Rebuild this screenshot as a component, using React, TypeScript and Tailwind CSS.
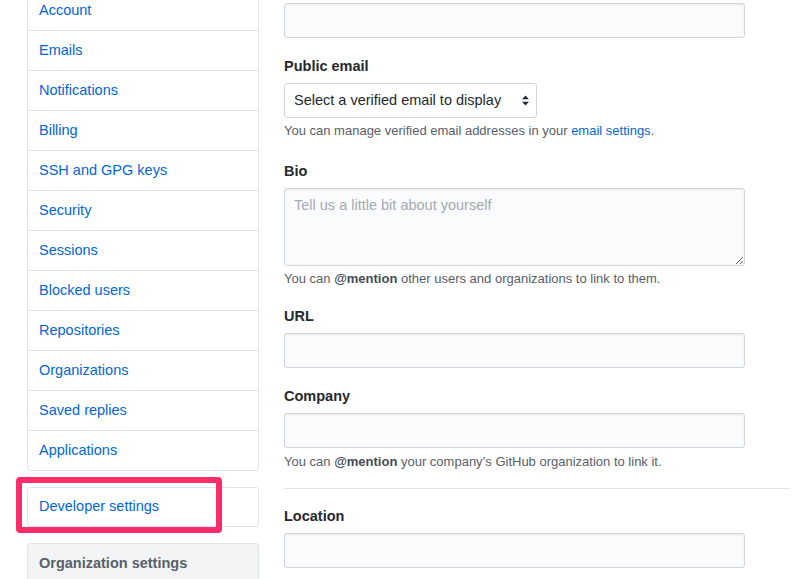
import React from 'react';

const navItems = [
  'Account',
  'Emails',
  'Notifications',
  'Billing',
  'SSH and GPG keys',
  'Security',
  'Sessions',
  'Blocked users',
  'Repositories',
  'Organizations',
  'Saved replies',
  'Applications',
];

const inputCls =
  'block w-[461px] h-[35px] rounded-[3px] border border-[#d1d5da] bg-[#fafbfc] shadow-[inset_0_1px_2px_rgba(27,31,35,0.075)] outline-none';

const Label = ({ children, top }: { children: React.ReactNode; top: string }) => (
  <div className={`${top} h-[22px] leading-[22px] text-[14.5px] font-bold text-[#24292e]`}>{children}</div>
);

const Sidebar = () => {
  return (
    <div className="w-[232px] shrink-0">
      <nav className="-mt-[10px] rounded-[3px] border border-[#e1e4e8] bg-white">
        {navItems.map((item, i) => (
          <a
            key={item}
            className={`flex items-center px-[11px] pt-[1px] text-[14.5px] text-[#0366d6] ${
              i === 0 ? 'h-[39px]' : 'h-[40px] border-t border-[#e1e4e8]'
            }`}
          >
            {item}
          </a>
        ))}
      </nav>

      <div className="relative mt-[16px]">
        <div className="flex h-[40px] items-center rounded-[3px] border border-[#e1e4e8] bg-white px-[11px] text-[14.5px] text-[#0366d6]">
          Developer settings
        </div>
        {/* highlight drawn over the item */}
        <div className="pointer-events-none absolute left-[-11px] top-[-10px] h-[56px] w-[206px] rounded-[4px] border-[6px] border-[#fd2d6c]" />
      </div>

      <div className="mt-[16px] rounded-t-[3px] border border-[#e1e4e8] bg-[#f3f4f6]">
        <div className="flex h-[40px] items-center px-[11px] text-[14.5px] font-bold text-[#586069]">
          Organization settings
        </div>
      </div>
    </div>
  );
};

const ProfileForm = () => {
  return (
    <div className="w-[506px] shrink-0 pt-[3px]">
      <input className={inputCls} />

      <Label top="mt-[17px]">Public email</Label>
      <div className="mt-[6px] flex h-[35px] w-[253px] items-center justify-between rounded-[3px] border border-[#d1d5da] bg-white pl-[9px] pr-[6px] text-[14.5px] text-[#24292e]">
        <span>Select a verified email to display</span>
        <svg width="9" height="11" viewBox="0 0 9 11">
          <path d="M4.5 0.5 L8 4.3 L1 4.3 Z" fill="#24292e" />
          <path d="M1 6.7 L8 6.7 L4.5 10.5 Z" fill="#24292e" />
        </svg>
      </div>
      <p className="mt-[4px] h-[18px] leading-[18px] text-[13px] text-[#586069]">
        You can manage verified email addresses in your <a className="text-[#0366d6]">email settings</a>.
      </p>

      <Label top="mt-[20px]">Bio</Label>
      <textarea
        className="mt-[6px] block h-[78px] w-[461px] rounded-[3px] border border-[#d1d5da] bg-[#fafbfc] px-[9px] py-[6px] text-[14.5px] leading-[21px] text-[#24292e] shadow-[inset_0_1px_2px_rgba(27,31,35,0.075)] outline-none placeholder:text-[#a3aab1]"
        placeholder="Tell us a little bit about yourself"
      />
      <p className="mt-[4px] h-[18px] leading-[18px] text-[13px] text-[#586069]">
        You can <strong className="font-bold text-[#444d56]">@mention</strong> other users and organizations to link to them.
      </p>

      <Label top="mt-[17px]">URL</Label>
      <input className={`mt-[6px] ${inputCls}`} />

      <Label top="mt-[17px]">Company</Label>
      <input className={`mt-[6px] ${inputCls}`} />
      <p className="mt-[5px] h-[18px] leading-[18px] text-[13px] text-[#586069]">
        You can <strong className="font-bold text-[#444d56]">@mention</strong> your company’s GitHub organization to link it.
      </p>

      <hr className="mt-[17px] border-0 border-t border-[#e1e4e8]" />

      <Label top="mt-[16px]">Location</Label>
      <input className={`mt-[6px] ${inputCls}`} />
    </div>
  );
};

export default function App() {
  return (
    <div className="h-[579px] w-[800px] overflow-hidden bg-white font-['Liberation_Sans',Arial,sans-serif]">
      <div className="flex pl-[27px]">
        <Sidebar />
        <div className="ml-[25px]">
          <ProfileForm />
        </div>
      </div>
    </div>
  );
}
